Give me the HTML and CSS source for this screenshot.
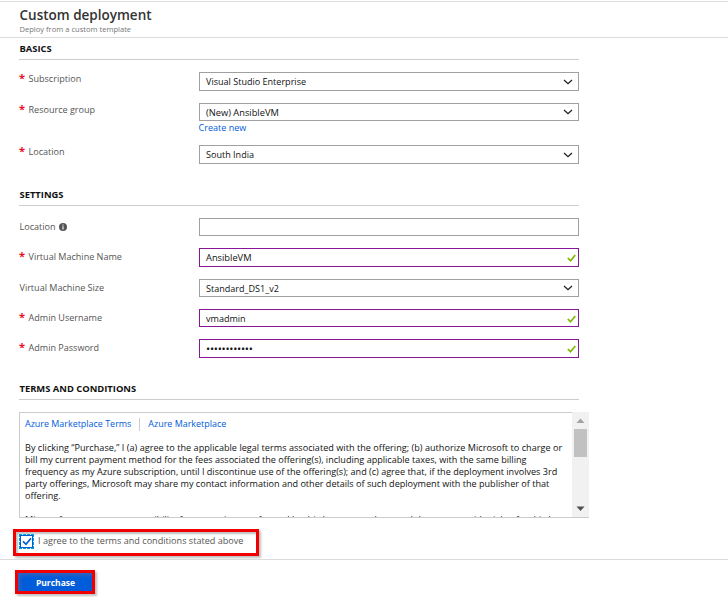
FILE: index.html
```html
<!DOCTYPE html>
<html lang="en">
<head>
<meta charset="utf-8">
<title>Custom deployment</title>
<link rel="stylesheet" href="styles.css">
</head>
<body>
<svg class="defs" aria-hidden="true">
  <symbol id="chevron" viewBox="0 0 10 6"><path d="M1 1l4 3.700L9 1" fill="none" stroke="#222" stroke-width="1.300"/></symbol>
  <symbol id="check" viewBox="0 0 9 8"><path d="M.8 4l2.700 2.700L8.300 1" fill="none" stroke="#7fba00" stroke-width="1.700"/></symbol>
</svg>
<header class="blade-header">
  <h1>Custom deployment</h1>
  <p>Deploy from a custom template</p>
</header>
<main>
  <section class="basics">
    <h2>BASICS</h2>
    <div class="row">
      <label><b class="req">*</b>Subscription</label>
      <div class="field">Visual Studio Enterprise<svg class="chevron"><use href="#chevron"/></svg></div>
    </div>
    <div class="row group">
      <label><b class="req">*</b>Resource group</label>
      <div>
        <div class="field short wide">(New) AnsibleVM<svg class="chevron"><use href="#chevron"/></svg></div>
        <a class="create">Create new</a>
      </div>
    </div>
    <div class="row">
      <label><b class="req">*</b>Location</label>
      <div class="field">South India<svg class="chevron"><use href="#chevron"/></svg></div>
    </div>
  </section>
  <section class="settings">
    <h2>SETTINGS</h2>
    <div class="row r30">
      <label class="plain">Location<svg class="info" viewBox="0 0 8 8"><circle cx="4" cy="4" r="4" fill="#555"/><path d="M4 3.300v3.200M4 1.500v1" fill="none" stroke="#fff" stroke-width="1.100"/></svg></label>
      <div class="field short"></div>
    </div>
    <div class="row">
      <label><b class="req">*</b>Virtual Machine Name</label>
      <div class="field valid wide">AnsibleVM<svg class="check"><use href="#check"/></svg></div>
    </div>
    <div class="row r30">
      <label class="plain">Virtual Machine Size</label>
      <div class="field short">Standard_DS1_v2<svg class="chevron"><use href="#chevron"/></svg></div>
    </div>
    <div class="row r30">
      <label><b class="req">*</b>Admin Username</label>
      <div class="field short valid">vmadmin<svg class="check"><use href="#check"/></svg></div>
    </div>
    <div class="row r30">
      <label><b class="req">*</b>Admin Password</label>
      <div class="field valid"><span class="dots">••••••••••••</span><svg class="check"><use href="#check"/></svg></div>
    </div>
  </section>
  <section class="terms">
    <h2>TERMS AND CONDITIONS</h2>
    <div class="terms-box">
      <div class="terms-body">
        <nav><a>Azure Marketplace Terms</a><a>Azure Marketplace</a></nav>
        <p><span class="line-a">By clicking “Purchase,” I (a) agree to the applicable legal terms associated with the offering; (b) authorize Microsoft to charge or</span><br>bill my current payment method for the fees associated the offering(s), including applicable taxes, with the same billing<br>frequency as my Azure subscription, until I discontinue use of the offering(s); and (c) agree that, if the deployment involves 3rd<br>party offerings, Microsoft may share my contact information and other details of such deployment with the publisher of that<br>offering.</p>
        <p>Microsoft assumes no responsibility for any actions performed by third-party templates and does not provide rights for third-</p>
      </div>
      <div class="scrollbar">
        <svg class="arrow" viewBox="0 0 17 17"><path d="M4.500 11h8L8.500 6.500z" fill="#a3a3a3"/></svg>
        <div class="thumb"></div>
        <svg class="arrow end" viewBox="0 0 17 17"><path d="M4.500 6.500h8l-4 4.500z" fill="#505050"/></svg>
      </div>
    </div>
  </section>
  <div class="agree">
    <span class="checkbox"><svg viewBox="0 0 10 9"><path d="M1 4.300l3 3L9 1.200" fill="none" stroke="#015cda" stroke-width="1.700"/></svg></span>
    I agree to the terms and conditions stated above
  </div>
</main>
<footer><button class="purchase">Purchase</button></footer>
</body>
</html>
```
FILE: styles.css
```css
* { box-sizing: border-box; }
body {
  margin: 0;
  height: 597px;
  overflow: hidden;
  background: #fff;
  color: #111;
  font: 9.06px/12px "Open Sans", "Noto Sans", sans-serif;
  white-space: nowrap;
}
h1, h2, p { margin: 0; }
a { color: #015cda; }
.defs { display: block; width: 0; height: 0; }

.blade-header {
  height: 37px;
  margin-top: 1px;
  padding: 5px 0 0 19.5px;
  border-top: 1px solid #dcdcdc;
  border-bottom: 1px solid #dcdcdc;
}
.blade-header h1 { font-size: 13.5px; line-height: 17px; font-weight: 600; color: #333; }
.blade-header p { padding-top: 1px; font-size: 7.57px; line-height: 9px; color: #777; }

main { padding-left: 19px; }
h2 {
  width: 560px;
  height: 22px;
  padding: 5px 0 0 .5px;
  border-bottom: 1px solid #ccc;
  font-size: 9.4px;
  line-height: 12px;
  font-weight: 700;
}
.basics { height: 145px; }
.settings { height: 193px; }
.settings h2 { height: 23px; padding-top: 6px; }
.terms { height: 142px; }
.terms h2 { height: 24px; padding-top: 7px; }

.row { display: grid; grid-template-columns: 180px 380px; height: 31px; }
.row.group { height: 42px; }
.row.r30 { height: 30px; }
h2 + .row { margin-top: 12px; }
.row > label { color: #555; padding-top: 1px; }
.settings .row > label { padding-top: 3px; }
.settings .row > .plain { display: flex; align-items: center; height: 17px; padding: 1px 0 0 .5px; }
.req { display: inline-block; width: 9.5px; color: #e81123; font-size: 11px; line-height: 10px; }
.info { width: 8px; height: 8px; margin-left: 3px; }

.field {
  display: flex;
  align-items: center;
  height: 19px;
  padding: 1px 2px 0 6px;
  border: 1px solid #a0a0a0;
}
.short { height: 18px; }
.valid { border-color: #881798; }
.wide { font-size: 9.3px; }
.field svg { margin-left: auto; }
.field .chevron { width: 10px; height: 6px; margin: -1px 3px 0 auto; }
.check { width: 9px; height: 8px; }
.dots { font-size: 11px; letter-spacing: -.25px; }
.create { display: block; line-height: 14px; margin-left: -.5px; }

.terms-box {
  display: flex;
  width: 570px;
  height: 106px;
  margin-top: 12px;
  border-bottom: 1px solid #ccc;
}
.terms-body {
  width: 553px;
  height: 105px;
  padding: 5px 0 0 5px;
  overflow: hidden;
  border: solid #ccc;
  border-width: 1px 0 0 1px;
}
.terms-body nav { display: flex; height: 13px; margin-bottom: 11px; font-size: 8.95px; }
.terms-body nav a + a { margin-left: 8px; padding-left: 8px; border-left: 1px solid #ccc; }
.terms-body p { margin-bottom: 12px; font-size: 9.09px; }
.line-a { letter-spacing: .03px; }
.scrollbar { display: flex; flex-direction: column; width: 17px; background: #f1f1f1; }
.arrow { display: block; width: 17px; height: 17px; flex: none; }
.thumb { height: 28px; margin: 0 2px; background: #c1c1c1; }
.end { margin-top: auto; }

.agree {
  display: flex;
  align-items: center;
  width: 246px;
  height: 27px;
  margin: 11px 0 3px -6px;
  padding: 0 0 0 4px;
  border: 3px solid #f00000;
  box-shadow: 2px 2px 2px #8888, inset 2px 2px 2px #8888;
  color: #555;
  font-size: 9.1px;
  line-height: 12px;
  padding-bottom: 3px;
}
.checkbox {
  display: grid;
  place-items: center;
  width: 13px;
  height: 13px;
  margin: 0 5px 0 0;
  border: 1px solid #015cda;
  outline: 1px dashed #00a2d8;
}
.checkbox svg { width: 10px; height: 9px; }
footer { height: 38px; padding: 10px 0 0 15px; border-top: 1px solid #dcdcdc; }
.purchase {
  display: block;
  width: 80px;
  height: 24px;
  padding: 0 0 0 1px;
  border: 3px solid #f00000;
  box-shadow: 2px 2px 2px #8888, inset 3px 3px 3px #56a8;
  background: #015cda;
  color: #fff;
  font: 700 8.500px "Open Sans", sans-serif;
}
```
